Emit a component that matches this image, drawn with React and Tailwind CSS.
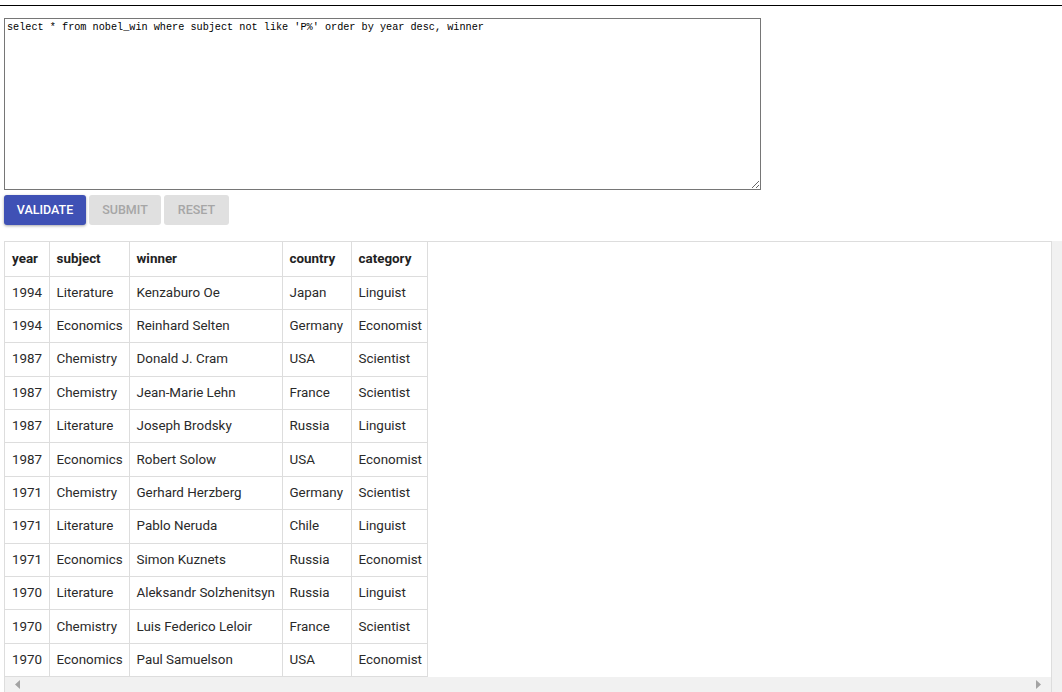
import React from 'react';

const rows = [
  ['1994', 'Literature', 'Kenzaburo Oe', 'Japan', 'Linguist'],
  ['1994', 'Economics', 'Reinhard Selten', 'Germany', 'Economist'],
  ['1987', 'Chemistry', 'Donald J. Cram', 'USA', 'Scientist'],
  ['1987', 'Chemistry', 'Jean-Marie Lehn', 'France', 'Scientist'],
  ['1987', 'Literature', 'Joseph Brodsky', 'Russia', 'Linguist'],
  ['1987', 'Economics', 'Robert Solow', 'USA', 'Economist'],
  ['1971', 'Chemistry', 'Gerhard Herzberg', 'Germany', 'Scientist'],
  ['1971', 'Literature', 'Pablo Neruda', 'Chile', 'Linguist'],
  ['1971', 'Economics', 'Simon Kuznets', 'Russia', 'Economist'],
  ['1970', 'Literature', 'Aleksandr Solzhenitsyn', 'Russia', 'Linguist'],
  ['1970', 'Chemistry', 'Luis Federico Leloir', 'France', 'Scientist'],
  ['1970', 'Economics', 'Paul Samuelson', 'USA', 'Economist'],
];

const headers = [
  { name: 'year', cls: 'w-[44px]' },
  { name: 'subject', cls: 'w-[80px]' },
  { name: 'winner', cls: 'w-[153px]' },
  { name: 'country', cls: 'w-[69px]' },
  { name: 'category', cls: 'w-[76px]' },
];

export default function App() {
  return (
    <div className="w-[1062px] h-[692px] overflow-hidden bg-white font-['Roboto',sans-serif] text-[#212121]">
      <div className="pt-[5px]">
        <div className="border-t border-black" />
      </div>

      <div className="pl-1 pt-3">
        <textarea
          className="block w-[757px] h-[172px] border border-[#767676] px-[2px] pt-[2px] font-['Liberation_Mono',monospace] text-[10.2px] leading-[14px] text-black outline-none resize"
          defaultValue="select * from nobel_win where subject not like 'P%' order by year desc, winner"
        />
      </div>

      {/* --- ACTION BUTTONS --- */}
      <div className="flex gap-[3px] pl-1 pt-[5px]">
        <button className="h-[30px] w-[82px] rounded-[3px] bg-[#3f51b5] text-white text-[12.5px] font-medium uppercase shadow-[0_1px_3px_rgba(0,0,0,0.35)]">
          Validate
        </button>
        <button className="h-[30px] w-[72px] rounded-[3px] bg-[#e0e0e0] text-[#a6a6a6] text-[12.5px] font-medium uppercase">
          Submit
        </button>
        <button className="h-[30px] w-[65px] rounded-[3px] bg-[#e0e0e0] text-[#a6a6a6] text-[12.5px] font-medium uppercase">
          Reset
        </button>
      </div>

      {/* --- RESULT TABLE --- */}
      <div className="flex pl-1 pt-4">
        <div className="flex flex-col w-[1053px] h-[460px] border-t border-l border-r border-[#ddd]">
          <div className="flex-1 bg-white">
            <table className="table-fixed border-collapse text-[13.4px] w-[422px]">
              <thead>
                <tr>
                  {headers.map((h) => (
                    <th key={h.name} className={`${h.cls} h-[34px] border border-[#ddd] border-t-0 border-l-0 px-[7px] text-left font-bold text-[#222]`}>
                      {h.name}
                    </th>
                  ))}
                </tr>
              </thead>
              <tbody>
                {rows.map((r, i) => (
                  <tr key={i}>
                    {r.map((c, j) => (
                      <td key={j} className="h-[33.4px] whitespace-nowrap border border-[#ddd] border-l-0 px-[7px] text-left text-[#2a2a2a]">
                        {c}
                      </td>
                    ))}
                  </tr>
                ))}
              </tbody>
            </table>
          </div>
          <div className="mb-[9px] h-[15px] bg-[#f1f1f1] flex items-center justify-between px-[10px] shrink-0">
            <svg width="5" height="9" viewBox="0 0 5 9"><path d="M5 0 L0 4.5 L5 9 Z" fill="#a3a3a3" /></svg>
            <svg width="5" height="9" viewBox="0 0 5 9"><path d="M0 0 L5 4.5 L0 9 Z" fill="#a3a3a3" /></svg>
          </div>
        </div>
        <div className="w-[10px] h-[460px] bg-[#f1f1f1]" />
      </div>
    </div>
  );
}
